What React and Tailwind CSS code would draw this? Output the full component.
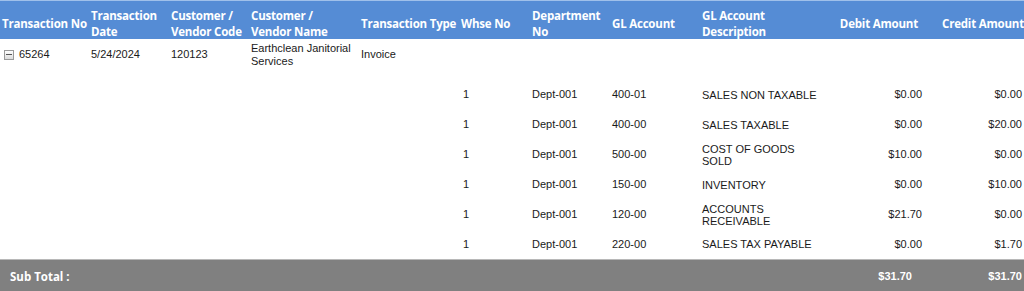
const DETAILS = [
  { whse: "1", dept: "Dept-001", gl: "400-01", desc: "SALES NON TAXABLE", debit: "$0.00", credit: "$0.00" },
  { whse: "1", dept: "Dept-001", gl: "400-00", desc: "SALES TAXABLE", debit: "$0.00", credit: "$20.00" },
  { whse: "1", dept: "Dept-001", gl: "500-00", desc: "COST OF GOODS SOLD", debit: "$10.00", credit: "$0.00" },
  { whse: "1", dept: "Dept-001", gl: "150-00", desc: "INVENTORY", debit: "$0.00", credit: "$10.00" },
  { whse: "1", dept: "Dept-001", gl: "120-00", desc: "ACCOUNTS RECEIVABLE", debit: "$21.70", credit: "$0.00" },
  { whse: "1", dept: "Dept-001", gl: "220-00", desc: "SALES TAX PAYABLE", debit: "$0.00", credit: "$1.70" },
];

const HEAD = "px-[2px] text-left align-middle font-bold leading-[16px] whitespace-nowrap overflow-hidden";

function CollapseIcon() {
  return (
    <span className="inline-flex items-center justify-center w-[10px] h-[10px] border border-[#9a9a9a] bg-gradient-to-b from-white to-[#dcdcdc] mr-[5px] relative -top-[3px]">
      <span className="block w-[6px] h-[1px] bg-[#555]" />
    </span>
  );
}

// header labels sit a few px low in the grid header
function H({ children }) {
  return <span className="block relative top-[4px]">{children}</span>;
}

export default function App() {
  return (
    <div className="w-[1024px] h-[291px] bg-white overflow-hidden">
      <table className="table-fixed border-collapse w-[1024px] text-[11px] text-[#1a1a1a] font-['Liberation_Sans',Arial,sans-serif]">
        <colgroup>
          <col className="w-[89px]" />
          <col className="w-[80px]" />
          <col className="w-[80px]" />
          <col className="w-[110px]" />
          <col className="w-[100px]" />
          <col className="w-[71px]" />
          <col className="w-[80px]" />
          <col className="w-[90px]" />
          <col className="w-[128px]" />
          <col className="w-[98px]" />
          <col className="w-[98px]" />
        </colgroup>
        <thead>
          <tr className="h-[38px] bg-[#558cd5] text-white text-[11.5px] tracking-[-0.2px] font-['Open_Sans',sans-serif] border-t border-[#9fc0ea]">
            <th className={HEAD}><H>Transaction No</H></th>
            <th className={HEAD}><H>Transaction<br />Date</H></th>
            <th className={HEAD}><H>Customer /<br />Vendor Code</H></th>
            <th className={HEAD}><H>Customer /<br />Vendor Name</H></th>
            <th className={HEAD}><H>Transaction Type</H></th>
            <th className={HEAD}><H>Whse No</H></th>
            <th className={HEAD}><H>Department<br />No</H></th>
            <th className={HEAD}><H>GL Account</H></th>
            <th className={HEAD}><H>GL Account<br />Description</H></th>
            <th className={`${HEAD} !text-right pr-[8px]`}><H>Debit Amount</H></th>
            <th className={`${HEAD} !text-right !pr-0`}><H>Credit Amount</H></th>
          </tr>
        </thead>
        <tbody>
          <tr className="h-[32px]">
            <td className="px-[4px] align-middle whitespace-nowrap">
              <CollapseIcon />
              65264
            </td>
            <td className="px-[2px] align-middle">5/24/2024</td>
            <td className="px-[2px] align-middle">120123</td>
            <td className="px-[2px] align-middle leading-[13px]">Earthclean Janitorial Services</td>
            <td className="px-[2px] align-middle">Invoice</td>
            <td colSpan={6} />
          </tr>
          <tr className="h-[9px]">
            <td colSpan={11} />
          </tr>
          {DETAILS.map((d, i) => (
            <tr key={i} className="h-[30px]">
              <td colSpan={5} />
              <td className="px-[4px] align-middle">{d.whse}</td>
              <td className="px-[2px] align-middle">{d.dept}</td>
              <td className="px-[2px] align-middle">{d.gl}</td>
              <td className="pl-[2px] pr-[6px] align-middle leading-[12px]">{d.desc}</td>
              <td className="text-right align-middle pr-[4px]">{d.debit}</td>
              <td className="text-right align-middle pr-[2px]">{d.credit}</td>
            </tr>
          ))}
          <tr className="h-[33px] bg-[#808080] text-white border-t border-[#b8b8b8]">
            <td colSpan={9} className="pl-[10px] align-middle font-bold text-[11.5px] font-['Open_Sans',sans-serif]">
              Sub Total :
            </td>
            <td className="text-right align-middle pr-[14px] font-bold">$31.70</td>
            <td className="text-right align-middle pr-[2px] font-bold">$31.70</td>
          </tr>
        </tbody>
      </table>
    </div>
  );
}
